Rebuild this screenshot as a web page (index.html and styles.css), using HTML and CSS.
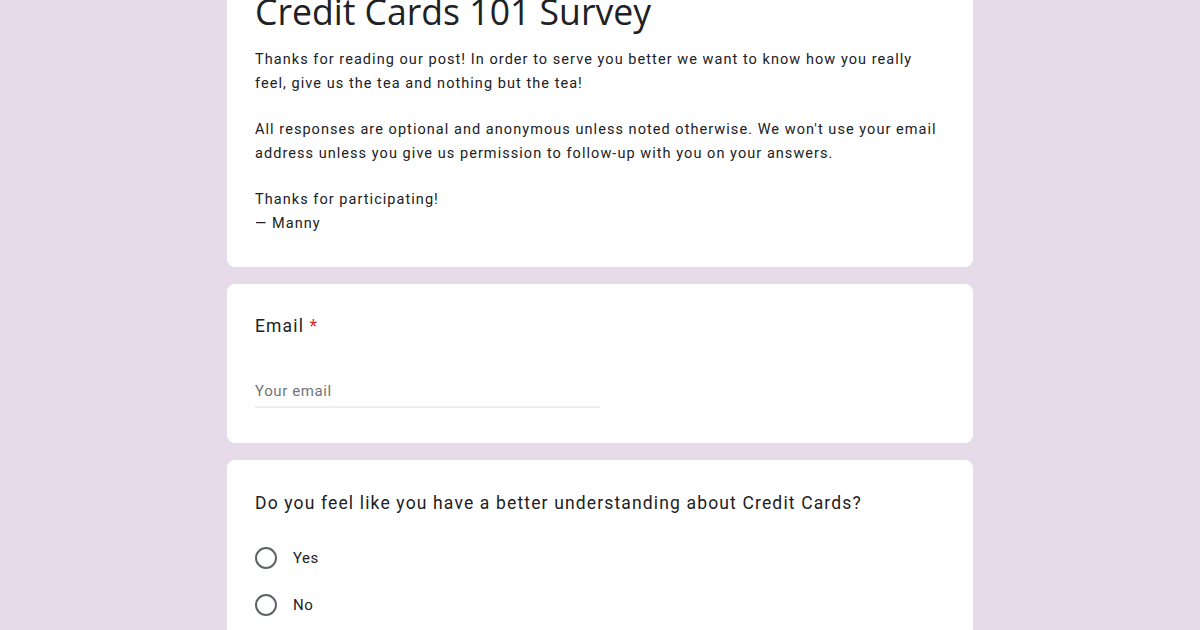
FILE: index.html
```html
<!DOCTYPE html>
<html lang="en">
<head>
<meta charset="utf-8">
<title>Credit Cards 101 Survey</title>
<link rel="stylesheet" href="styles.css">
</head>
<body>
<main class="form">
  <section class="card intro">
    <h1 class="title">Credit Cards 101 Survey</h1>
    <div class="desc">
      <p>Thanks for reading our post! In order to serve you better we want to know how you really feel, give us the tea and nothing but the tea!</p>
      <p>All responses are optional and anonymous unless noted otherwise. We won't use your email address unless you give us permission to follow-up with you on your answers.</p>
      <p>Thanks for participating!<br>— Manny</p>
    </div>
  </section>
  <section class="card question">
    <div class="qtitle">Email <span class="req">*</span></div>
    <div class="input">Your email</div>
  </section>
  <section class="card question">
    <div class="qtitle">Do you feel like you have a better understanding about Credit Cards?</div>
    <div class="options">
      <label class="opt"><span class="radio"></span><span class="optlabel">Yes</span></label>
      <label class="opt"><span class="radio"></span><span class="optlabel">No</span></label>
    </div>
  </section>
</main>
</body>
</html>
```
FILE: styles.css
```css
html, body {
  margin: 0;
  padding: 0;
  background: #e5dbe9;
  overflow: hidden;
}
body {
  font-family: Roboto, "Liberation Sans", Arial, sans-serif;
  color: #202124;
}
.form {
  width: 746px;
  margin: -40px auto 0;
  display: flex;
  flex-direction: column;
  gap: 17px;
}
.card {
  background: #fff;
  border-radius: 8px;
  padding: 0 28px;
}
.intro {
  padding-top: 26.5px;
  padding-bottom: 31px;
}
.title {
  margin: 0;
  font-family: "Open Sans", Roboto, sans-serif;
  font-weight: 400;
  font-size: 35.6px;
  line-height: 48px;
  letter-spacing: 0;
}
.desc {
  margin-top: 13px;
  font-size: 14.5px;
  line-height: 24px;
  letter-spacing: 1.05px;
}
.desc p {
  margin: 0 0 22px;
}
.desc p:last-child {
  margin-bottom: 0;
}
.question {
  padding-top: 30px;
  padding-bottom: 35px;
}
.question + .question {
  padding-top: 31px;
}
.qtitle {
  font-size: 17.5px;
  line-height: 24px;
  letter-spacing: 1.15px;
}
.req {
  color: #d93025;
}
.input {
  margin-top: 41px;
  width: 345px;
  font-size: 15px;
  line-height: 24px;
  color: #70757a;
  letter-spacing: 0.6px;
  padding-bottom: 3px;
  border-bottom: 2px solid #eceef1;
}
.options {
  margin-top: 31px;
  display: flex;
  flex-direction: column;
  gap: 23px;
}
.opt {
  display: flex;
  align-items: center;
  gap: 16px;
  height: 24px;
}
.radio {
  width: 18px;
  height: 18px;
  border: 2px solid #5f6368;
  border-radius: 50%;
  flex: none;
}
.optlabel {
  font-size: 15px;
  letter-spacing: 0.5px;
}
```
